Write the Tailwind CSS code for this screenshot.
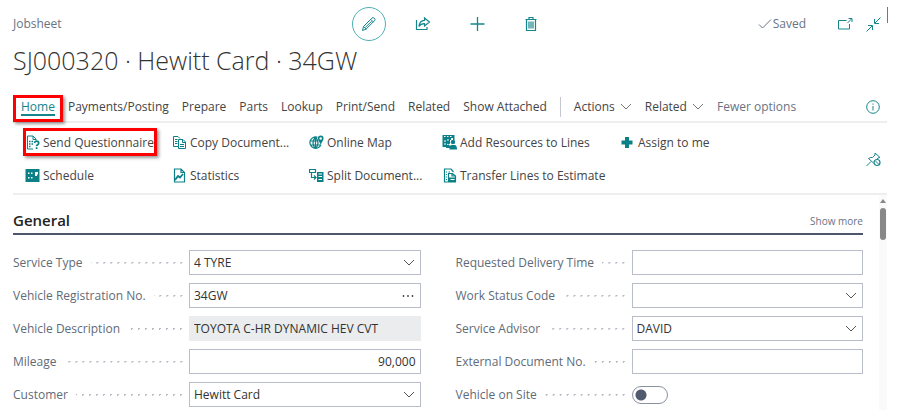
<!DOCTYPE html>
<html lang="en">
<head>
<meta charset="utf-8">
<meta name="viewport" content="width=device-width, initial-scale=1">
<title>SJ000320 · Hewitt Card · 34GW</title>
<script src="https://cdn.jsdelivr.net/npm/@tailwindcss/browser@4"></script>
</head>
<body class="bg-white font-['Open_Sans','Noto_Sans',sans-serif] text-[12px] leading-4 text-[#444]">
<svg class="hidden">
  <symbol id="chevron" viewBox="0 0 12 8"><path d="M1 1l5 5 5-5" fill="none" stroke="currentColor"/></symbol>
</svg>
<div class="flex h-screen flex-col overflow-hidden px-[13px] pt-[7px]">

  <header class="grid shrink-0 grid-cols-[1fr_auto_1fr] items-center">
    <span class="text-[#697384]">Jobsheet</span>
    <div class="flex gap-5 text-[#16868d]">
      <button aria-label="Edit" class="flex size-[34px] items-center justify-center rounded-full border border-[#4fb0b4]">
        <svg class="size-4" viewBox="0 0 16 16" fill="none" stroke="currentColor"><path d="M1.500 14.500l1-4 8.300-8.300q1.300-1.200 2.600 0t0 2.600l-8.300 8.300zM9.800 3.400l2.800 2.800M2.500 10.500l3 2.800M4.400 11.400l6.400-6.400"/></svg>
      </button>
      <button aria-label="Share" class="flex size-[34px] items-center justify-center">
        <svg class="size-4" viewBox="0 0 16 16" fill="none" stroke="currentColor" stroke-width="1.200"><path d="M1.500 4v9.500h10.500V11M9.500 2l5 4-5 4V7.700Q6 7.500 4 10.500q.5-6 5.500-6.200z"/></svg>
      </button>
      <button aria-label="New" class="flex size-[34px] items-center justify-center">
        <svg class="size-4" viewBox="0 0 16 16" fill="none" stroke="currentColor" stroke-width="1.300"><path d="M8.500 1v14M1.500 8h14"/></svg>
      </button>
      <button aria-label="Delete" class="flex size-[34px] items-center justify-center">
        <svg class="size-4" viewBox="0 0 16 16" fill="none" stroke="currentColor"><path d="M2.500 3.500h11M6 3V1.500h4V3M3.500 3.500v11h9v-11M6 5.500v7M8 5.500v7M10 5.500v7" stroke-width="1.200"/></svg>
      </button>
    </div>
    <div class="relative flex items-center justify-end self-stretch text-[#16868d]">
      <span class="mr-8 flex items-center gap-px text-[#697384]">
        <svg class="h-3 w-[14px]" viewBox="0 0 14 12" fill="none" stroke="currentColor"><path d="M1 6.500l3.500 3.500L13 1.500"/></svg>Saved
      </span>
      <button aria-label="Open in new window" class="mr-[13px]">
        <svg class="block size-[15px]" viewBox="0 0 15 15" fill="none" stroke="currentColor"><path d="M8.500 3.500h-8v8.500h11V7M9.500 6l4-4M10.500 1.500h3.500V5"/></svg>
      </button>
      <button aria-label="Collapse" class="mr-[6px]">
        <svg class="block size-[15px]" viewBox="0 0 15 15" fill="none" stroke="currentColor"><path d="M14.500.5L9 6M8.500 2v4.500H13M.5 14.500L6 9M2 8.500h4.500V13"/></svg>
      </button>
      <span class="absolute top-0 -right-px h-4 w-px bg-[#777]"></span>
    </div>
  </header>

  <h1 class="shrink-0 text-[25px] leading-[38px] font-light text-[#333]">SJ000320 · Hewitt Card · 34GW</h1>

  <nav class="mt-[14px] flex h-[30px] shrink-0 items-center justify-between border-b-2 border-[#eee] pr-[7px] pl-2">
    <div class="flex items-center gap-[13px] whitespace-nowrap">
      <a href="#" class="relative text-[#16868d]">Home<span class="absolute inset-x-0 -bottom-px h-[2px] bg-[#16868d]"></span><span class="absolute -inset-x-2 -top-1 -bottom-[7px] border-3 border-[#f00] shadow-[2px_2px_3px_#0006]"></span></a>
      <a href="#">Payments/Posting</a>
      <a href="#">Prepare</a>
      <a href="#">Parts</a>
      <a href="#">Lookup</a>
      <a href="#">Print/Send</a>
      <a href="#">Related</a>
      <a href="#">Show Attached</a>
      <span class="h-5 w-px bg-[#c4c7d0]"></span>
      <button class="flex items-center gap-[5px]">Actions<svg class="h-2 w-3 text-[#777]"><use href="#chevron"/></svg></button>
      <button class="flex items-center gap-[5px]">Related<svg class="h-2 w-3 text-[#777]"><use href="#chevron"/></svg></button>
      <button class="text-[#697384]">Fewer options</button>
    </div>
    <button aria-label="Details" class="text-[#16868d]">
      <svg class="block size-[14px]" viewBox="0 0 14 14" fill="none" stroke="currentColor"><circle cx="7" cy="7" r="6.300"/><path d="M7 6v4.500M7 3.500v1.200"/></svg>
    </button>
  </nav>

  <div class="flex shrink-0 items-center justify-between border-b-2 border-[#eee] pt-[3px] pr-[6px] pb-px pl-3">
    <div class="grid grid-cols-[147px_137px_133px_178px_auto] whitespace-nowrap [&_button]:flex [&_button]:h-[33px] [&_button]:items-center [&_button]:gap-[3px] [&_svg]:size-[15px] [&_svg]:shrink-0 [&_svg]:text-[#0b8086]">
      <button class="relative">
        <svg viewBox="0 0 15 15" fill="none" stroke="currentColor"><path d="M8 14H2.500V1H8l3 3v1.500M8 1v3.500h3"/><path d="M4 6.500h1.500M6.500 6.500H8M4 9h1.500M6.500 9H8M4 11.500h1.500" stroke-width="1.400"/><path d="M9.500 8q.3-1.800 2.200-1.800T13.700 8q0 1-1.100 1.700t-1 1.500M11.600 12.300v1.700" stroke-width="1.700"/></svg>
        Send Questionnaire
        <span class="absolute top-[2px] -left-[2px] h-7 w-[134px] border-3 border-[#f00] shadow-[2px_2px_3px_#0006]"></span>
      </button>
      <button>
        <svg viewBox="0 0 15 15" fill="none" stroke="currentColor"><path d="M6 11.500H1.500v-10H6L8 3.500M3 4.500h2.500M3 6.500h2.500M3 8.500h2.500M6.500 4.500h4.500l2.500 2.500v6.500h-7zM10.500 4.500v3h3M8 9.500h4M8 11.500h4"/></svg>
        Copy Document...
      </button>
      <button>
        <svg viewBox="0 0 15 15" fill="none" stroke="currentColor"><path d="M8.500 2.200A5.700 5.700 0 1 0 12 9.500M1 6h8M1 10h10.500M6.500 2v12M6.500 2Q1.500 8 6.500 13.700M6.500 2Q11.500 8 6.500 13.700" stroke-width="1.200"/><path d="M11.700 9.500L9.200 5Q8 .5 11.700.5T14.200 5z" fill="currentColor" stroke="none"/><circle cx="11.700" cy="3.500" r="1.200" fill="#fff" stroke="none"/></svg>
        Online Map
      </button>
      <button>
        <svg viewBox="0 0 15 15" fill="currentColor"><path d="M.5 0h12v5H11V3H9v2H8v3H5v4H.5z"/><path d="M2 1.500h1.500M5 1.500h1.500M8 1.500h1.500M2 6h2M2 9h2M5 5h2" stroke="#fff"/><circle cx="6.500" cy="7.500" r="1.800"/><circle cx="11" cy="7" r="2.200"/><path d="M4 13q0-3.500 2.700-3.500L8 11l1-1h4q2 .5 2 4.500H7.500V13z"/></svg>
        Add Resources to Lines
      </button>
      <button>
        <svg viewBox="0 0 15 15"><path d="M5 2h4v3.500h3.500v4H9V13H5V9.500H1.500v-4H5z" fill="currentColor"/></svg>
        Assign to me
      </button>
      <button>
        <svg viewBox="0 0 15 15"><path d="M.5 1H14.500v13H.5z" fill="currentColor"/><path d="M3 4.500h1.500V6H3zM6 4.500h1.500V6H6zM3 9h1.500v1.500H3zM6 9h1.500v1.500H6zM10 4h3v2.500h-1V8h-2z" fill="#fff"/></svg>
        Schedule
      </button>
      <button>
        <svg viewBox="0 0 15 15" fill="none" stroke="currentColor"><path d="M2.500 1H9l3.500 3.500V14h-10zM9 1v3.500h3.500" stroke-width="1.200"/><path d="M3 12l3-4 2 1.500L11 6" stroke-width="1.800"/></svg>
        Statistics
      </button>
      <button>
        <svg viewBox="0 0 15 15" fill="none" stroke="currentColor"><path d="M.5 1.500h6v3h-6zM2.500 5v4.500H7M5 7.500l2 2-2 2" stroke-width="1.200"/><path d="M8 4h6.500v10H8z" fill="currentColor" stroke="none"/><path d="M9.500 6h3.500M9.500 8.500h3.500M9.500 11.500h3.500" stroke="#fff"/></svg>
        Split Document...
      </button>
      <button>
        <svg viewBox="0 0 15 15" fill="none" stroke="currentColor"><path d="M6 14H2.500V1H9l2.500 3M4 4h1M6.500 4H8M4 6.500h1M4 9h1M4 11.500h1M6.500 14V5.500h4L13.500 8v6zM10 5.500V8h3.500" stroke-width="1.200"/><path d="M7 9.500h6.500V14H7z" fill="currentColor" stroke="none"/><path d="M8.500 11.500h4" stroke="#fff"/></svg>
        Transfer Lines to Estimate
      </button>
    </div>
    <button aria-label="Unpin" class="text-[#16868d]">
      <svg class="block size-[15px]" viewBox="0 0 15 15" fill="none" stroke="currentColor"><path d="M.5 14L5 9.500M7.500 11L2.500 6.500Q4.500 5 6.500 5.500L9 3V1l5 4.500-2 .5-1 1"/><circle cx="11" cy="10.500" r="3" stroke-width="1.200"/><path d="M9 8.500l4 4"/></svg>
    </button>
  </div>

  <div class="flex min-h-0 flex-1">
    <main class="min-w-0 flex-1 pt-3">
      <div class="flex h-7 items-center justify-between border-b-2 border-[#4d566a]">
        <h2 class="text-[15px] leading-5 font-semibold text-[#222]">General</h2>
        <button class="pt-px text-[10px] text-[#697384]">Show more</button>
      </div>
      <form class="grid grid-cols-2 gap-x-[35px] pt-[15px] text-[#333] [&_label]:text-[#5f6b78]">
        <div class="flex flex-col gap-2">
          <div class="flex h-[25px] items-center">
            <div class="flex w-44 shrink-0 items-center gap-2 pr-[5px]"><label for="service">Service Type</label><span class="h-[3px] flex-1 bg-[radial-gradient(circle,#b4b9c1_1px,transparent_1px)] bg-[length:7px_3px] bg-right bg-repeat-x"></span></div>
            <div class="relative h-full flex-1"><select id="service" class="size-full appearance-none border border-[#b9bdc7] px-1"><option>4 TYRE</option></select><svg class="pointer-events-none absolute top-[9px] right-[6px] h-2 w-3 text-[#555]"><use href="#chevron"/></svg></div>
          </div>
          <div class="flex h-[25px] items-center">
            <div class="flex w-44 shrink-0 items-center gap-2 pr-[5px]"><label for="reg">Vehicle Registration No.</label><span class="h-[3px] flex-1 bg-[radial-gradient(circle,#b4b9c1_1px,transparent_1px)] bg-[length:7px_3px] bg-right bg-repeat-x"></span></div>
            <div class="flex h-full flex-1 items-center border border-[#b9bdc7] pr-[6px] pl-1"><input id="reg" value="34GW" class="min-w-0 flex-1 outline-none"><button type="button" aria-label="Look up registration"><svg class="block h-2 w-3" viewBox="0 0 12 8" fill="#444"><circle cx="1.500" cy="4" r=".9"/><circle cx="6" cy="4" r=".9"/><circle cx="10.500" cy="4" r=".9"/></svg></button></div>
          </div>
          <div class="flex h-[25px] items-center">
            <div class="flex w-44 shrink-0 items-center gap-2 pr-[5px]"><label for="desc">Vehicle Description</label><span class="h-[3px] flex-1 bg-[radial-gradient(circle,#b4b9c1_1px,transparent_1px)] bg-[length:7px_3px] bg-right bg-repeat-x"></span></div>
            <input id="desc" readonly value="TOYOTA C-HR DYNAMIC HEV CVT" class="h-full min-w-0 flex-1 bg-[#eaecee] px-[5px]">
          </div>
          <div class="flex h-[25px] items-center">
            <div class="flex w-44 shrink-0 items-center gap-2 pr-[5px]"><label for="mileage">Mileage</label><span class="h-[3px] flex-1 bg-[radial-gradient(circle,#b4b9c1_1px,transparent_1px)] bg-[length:7px_3px] bg-right bg-repeat-x"></span></div>
            <input id="mileage" value="90,000" class="h-full min-w-0 flex-1 border border-[#b9bdc7] px-1 text-right">
          </div>
          <div class="flex h-[25px] items-center">
            <div class="flex w-44 shrink-0 items-center gap-2 pr-[5px]"><label for="customer">Customer</label><span class="h-[3px] flex-1 bg-[radial-gradient(circle,#b4b9c1_1px,transparent_1px)] bg-[length:7px_3px] bg-right bg-repeat-x"></span></div>
            <div class="relative h-full flex-1"><select id="customer" class="size-full appearance-none border border-[#b9bdc7] px-1"><option>Hewitt Card</option></select><svg class="pointer-events-none absolute top-[9px] right-[6px] h-2 w-3 text-[#555]"><use href="#chevron"/></svg></div>
          </div>
        </div>
        <div class="flex flex-col gap-2">
          <div class="flex h-[25px] items-center">
            <div class="flex w-44 shrink-0 items-center gap-2 pr-[5px]"><label for="delivery">Requested Delivery Time</label><span class="h-[3px] flex-1 bg-[radial-gradient(circle,#b4b9c1_1px,transparent_1px)] bg-[length:7px_3px] bg-right bg-repeat-x"></span></div>
            <input id="delivery" class="h-full min-w-0 flex-1 border border-[#b9bdc7] px-1">
          </div>
          <div class="flex h-[25px] items-center">
            <div class="flex w-44 shrink-0 items-center gap-2 pr-[5px]"><label for="status">Work Status Code</label><span class="h-[3px] flex-1 bg-[radial-gradient(circle,#b4b9c1_1px,transparent_1px)] bg-[length:7px_3px] bg-right bg-repeat-x"></span></div>
            <div class="relative h-full flex-1"><select id="status" class="size-full appearance-none border border-[#b9bdc7] px-1"><option></option></select><svg class="pointer-events-none absolute top-[9px] right-[6px] h-2 w-3 text-[#555]"><use href="#chevron"/></svg></div>
          </div>
          <div class="flex h-[25px] items-center">
            <div class="flex w-44 shrink-0 items-center gap-2 pr-[5px]"><label for="advisor">Service Advisor</label><span class="h-[3px] flex-1 bg-[radial-gradient(circle,#b4b9c1_1px,transparent_1px)] bg-[length:7px_3px] bg-right bg-repeat-x"></span></div>
            <div class="relative h-full flex-1"><select id="advisor" class="size-full appearance-none border border-[#b9bdc7] px-1"><option>DAVID</option></select><svg class="pointer-events-none absolute top-[9px] right-[6px] h-2 w-3 text-[#555]"><use href="#chevron"/></svg></div>
          </div>
          <div class="flex h-[25px] items-center">
            <div class="flex w-44 shrink-0 items-center gap-2 pr-[5px]"><label for="extdoc">External Document No.</label><span class="h-[3px] flex-1 bg-[radial-gradient(circle,#b4b9c1_1px,transparent_1px)] bg-[length:7px_3px] bg-right bg-repeat-x"></span></div>
            <input id="extdoc" class="h-full min-w-0 flex-1 border border-[#b9bdc7] px-1">
          </div>
          <div class="flex h-[25px] items-center">
            <div class="flex w-44 shrink-0 items-center gap-2 pr-[5px]"><label for="onsite">Vehicle on Site</label><span class="h-[3px] flex-1 bg-[radial-gradient(circle,#b4b9c1_1px,transparent_1px)] bg-[length:7px_3px] bg-right bg-repeat-x"></span></div>
            <input id="onsite" type="checkbox" role="switch" class="h-[18px] w-9 appearance-none rounded-full border border-[#8a91a0] bg-[radial-gradient(circle_at_8px_8px,#505c6d_5px,transparent_6px)]">
          </div>
        </div>
      </form>
    </main>
    <div class="ml-4 flex w-2 flex-col items-center gap-[5px] bg-[#fafafa] pt-1">
      <svg class="h-1 w-[6px]" viewBox="0 0 6 4"><path d="M3 0l3 4H0z" fill="#888"/></svg>
      <span class="h-8 w-[6px] rounded-full bg-[#888]"></span>
    </div>
  </div>
</div>
</body>
</html>
